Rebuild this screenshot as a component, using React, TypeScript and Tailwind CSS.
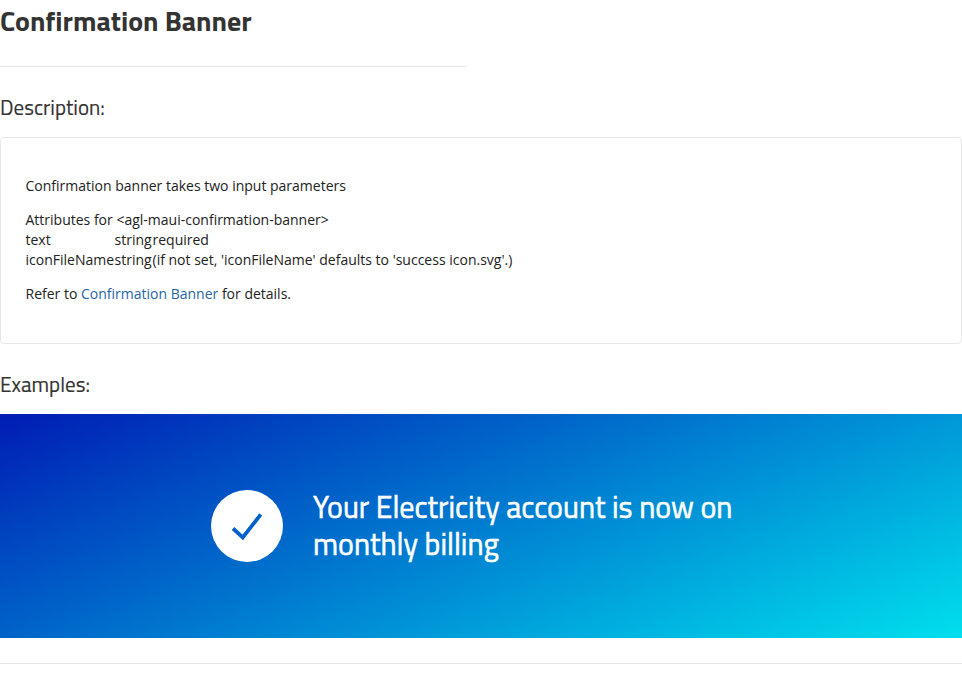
export default function App() {
  return (
    <main className="h-[688px] w-full overflow-hidden bg-white font-['Open_Sans',sans-serif] text-[14px] leading-[20px] text-[#222]">
      <h1 className="h-[42px] whitespace-nowrap font-['Titillium_Web','Open_Sans',sans-serif] text-[28px] leading-[42px] font-bold text-[#333]">Confirmation Banner</h1>
      <hr className="mt-6 w-[466px] border-[#e7e7e7]" />
      <h2 className="mt-[25px] h-[45px] origin-left scale-x-[0.955] whitespace-nowrap font-['Titillium_Web','Open_Sans',sans-serif] text-[22px] leading-[30px] text-[#333] [-webkit-text-stroke:0.15px]">Description:</h2>
      <section className="h-[207px] rounded-[4px] border border-[#e7e7e7] pt-[38px] pl-[24.5px]">
        <p>Confirmation banner takes two input parameters</p>
        <p className="mt-[14px]">Attributes for &lt;agl-maui-confirmation-banner&gt;</p>
        <div className="grid grid-cols-[89px_38px_1fr] whitespace-nowrap">
          <span>text</span><span>string</span><span>required</span>
          <span>iconFileName</span><span>string</span><span>(if not set, 'iconFileName' defaults to 'success icon.svg'.)</span>
        </div>
        <p className="mt-[14px]">Refer to <a className="text-[#2764a8]">Confirmation Banner</a> for details.</p>
      </section>
      <h2 className="mt-[25px] h-[45px] origin-left scale-x-[0.955] whitespace-nowrap font-['Titillium_Web','Open_Sans',sans-serif] text-[22px] leading-[30px] text-[#333] [-webkit-text-stroke:0.15px]">Examples:</h2>
      <section className="flex h-[224px] items-center bg-[linear-gradient(158deg,#001cb4,#00dfed)] pl-[211px]">
        <div className="flex size-[72px] items-center justify-center rounded-full bg-white">
          <svg width="72" height="72" viewBox="0 0 72 72" fill="none"><path d="M22 38.5L31.8 47.5L49.8 24.3" stroke="#0061c8" strokeWidth="3.8" /></svg>
        </div>
        <p className="mb-[3px] ml-[30px] origin-left scale-x-[0.9375] whitespace-nowrap font-['Titillium_Web','Open_Sans',sans-serif] text-[32px] leading-[37px] text-white [-webkit-text-stroke:0.6px]">Your Electricity account is now on<br />monthly billing</p>
      </section>
      <hr className="mt-[25px] border-[#e5e5e5]" />
    </main>
  );
}
